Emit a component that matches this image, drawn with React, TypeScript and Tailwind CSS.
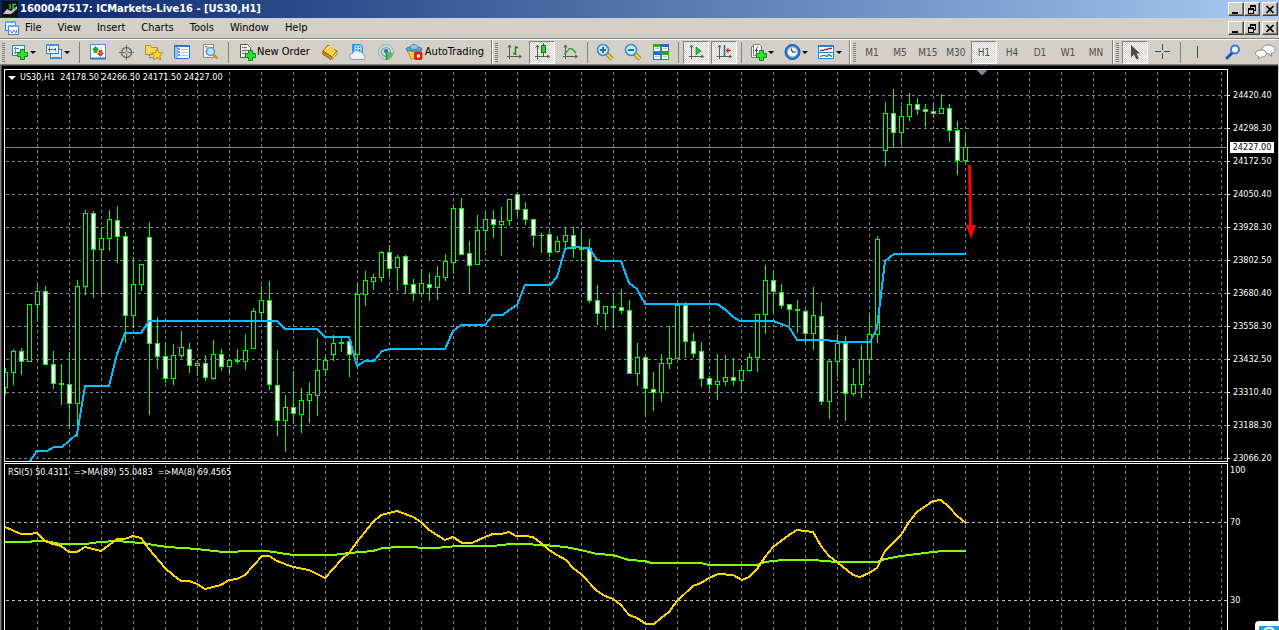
import type { ReactNode } from "react";

type Candle = [high: number, low: number, top: number, bottom: number, filled: 0 | 1];

const candles: Candle[] = [
  [368, 395, 372, 388, 0], [349, 385, 351, 373, 0], [348, 375, 351, 362, 1], [304, 362, 304, 362, 0],
  [284, 322, 291, 305, 0], [286, 365, 291, 365, 1], [351, 389, 364, 384, 1], [364, 405, 383, 385, 0],
  [352, 427, 384, 404, 1], [280, 437, 286, 404, 0], [210, 295, 213, 287, 0], [211, 298, 213, 250, 1],
  [227, 294, 238, 250, 0], [210, 251, 219, 239, 0], [206, 263, 220, 237, 1], [232, 343, 236, 316, 1],
  [257, 328, 284, 316, 0], [264, 291, 264, 285, 0], [222, 415, 237, 344, 1], [317, 369, 343, 357, 1],
  [342, 383, 356, 379, 1], [344, 385, 355, 379, 0], [331, 358, 347, 356, 0], [343, 373, 349, 366, 1],
  [360, 376, 363, 366, 0], [355, 381, 363, 378, 1], [340, 380, 354, 379, 0], [349, 371, 354, 367, 1],
  [359, 374, 360, 367, 0], [349, 364, 360, 362, 0], [334, 370, 350, 362, 0], [308, 349, 311, 349, 0],
  [286, 319, 300, 313, 0], [281, 390, 300, 385, 1], [350, 436, 385, 421, 1], [395, 452, 407, 421, 0],
  [371, 424, 407, 414, 1], [388, 433, 400, 415, 0], [382, 423, 394, 401, 0], [338, 416, 370, 396, 0],
  [357, 376, 360, 370, 0], [335, 361, 343, 355, 0], [337, 352, 342, 344, 0], [338, 377, 341, 355, 1],
  [283, 360, 294, 355, 0], [271, 306, 280, 295, 0], [274, 290, 277, 282, 0], [251, 282, 252, 278, 0],
  [245, 276, 252, 269, 1], [255, 291, 257, 268, 0], [255, 294, 256, 285, 1], [279, 301, 284, 294, 1],
  [269, 295, 283, 294, 0], [273, 301, 284, 288, 1], [266, 300, 276, 288, 0], [254, 281, 261, 278, 0],
  [207, 274, 208, 263, 0], [198, 255, 208, 255, 1], [241, 294, 253, 266, 1], [215, 265, 230, 265, 0],
  [212, 251, 219, 231, 0], [210, 238, 219, 225, 1], [207, 256, 221, 225, 0], [199, 226, 199, 221, 0],
  [194, 216, 194, 210, 1], [202, 225, 209, 220, 1], [219, 247, 219, 236, 1], [233, 253, 235, 236, 0],
  [231, 257, 234, 253, 1], [236, 253, 241, 252, 0], [227, 249, 235, 242, 0], [227, 258, 235, 249, 1],
  [231, 262, 248, 250, 0], [239, 303, 248, 301, 1], [285, 325, 300, 314, 1], [306, 330, 306, 314, 0],
  [294, 328, 306, 308, 0], [289, 314, 307, 311, 1], [300, 374, 310, 374, 1], [343, 386, 357, 374, 0],
  [357, 416, 357, 389, 1], [372, 411, 389, 393, 1], [354, 402, 363, 393, 0], [326, 369, 358, 364, 0],
  [305, 359, 305, 359, 0], [302, 358, 305, 342, 1], [333, 358, 341, 354, 1], [342, 387, 351, 379, 1],
  [376, 392, 378, 385, 1], [354, 400, 381, 385, 0], [355, 386, 377, 382, 0], [358, 386, 377, 381, 1],
  [365, 392, 370, 381, 0], [353, 372, 357, 371, 0], [314, 372, 314, 358, 0], [265, 334, 280, 315, 0],
  [271, 313, 280, 292, 1], [284, 309, 292, 306, 1], [304, 326, 304, 310, 1], [300, 333, 309, 311, 0],
  [309, 344, 311, 334, 1], [287, 350, 315, 334, 0], [302, 405, 316, 402, 1], [359, 419, 361, 402, 0],
  [334, 377, 343, 362, 0], [336, 421, 343, 394, 1], [368, 396, 384, 394, 0], [345, 398, 359, 385, 0],
  [315, 375, 334, 360, 0], [236, 343, 239, 335, 0], [102, 166, 113, 151, 0], [89, 148, 113, 133, 1],
  [106, 144, 116, 133, 0], [93, 121, 104, 117, 0], [98, 115, 104, 110, 1], [104, 127, 109, 112, 1],
  [104, 118, 111, 114, 1], [94, 114, 108, 114, 0], [104, 142, 108, 131, 1], [121, 175, 130, 161, 1],
  [135, 163, 147, 161, 0],
];

const trend =
  "30,461 37,451 47,451 54,447 62,447 69,441 77,434 85,386 109,386 117,354 125,333 141,333 149,321 277,321 285,329 317,329 325,337 349,337 357,366 365,361 374,361 382,351 390,349 445,349 453,331 461,325 485,325 493,315 503,315 509,310 517,305 525,285 550,285 557,277 565,249 574,247 581,247 583,248 589,248 597,260 603,261 621,261 629,283 637,289 645,304 717,304 726,310 733,317 740,321 773,321 789,327 797,340 821,340 837,341 839,342 870,342 877,328 885,261 894,254 966,254";

const fastMa =
  "5,527 21,534 29,534 37,533 45,541 53,544 61,546 69,552 77,552 85,547 93,549 101,551 109,545 117,539 125,539 133,536 141,538 149,549 165,568 173,575 181,581 189,581 197,584 205,589 221,585 229,580 237,579 245,575 262,556 269,556 277,561 293,567 309,570 325,578 341,560 349,553 357,542 373,522 381,515 397,511 413,517 421,522 429,530 445,540 453,537 462,543 472,543 485,537 493,534 501,534 509,532 516,536 525,536 533,537 541,543 549,550 557,555 566,560 573,568 581,574 597,591 605,596 613,599 621,605 629,615 637,618 646,624 654,624 661,618 669,612 677,601 693,586 701,583 709,578 718,574 733,575 742,580 749,577 757,569 765,557 773,547 781,541 789,535 797,530 813,532 821,546 829,556 837,562 853,575 860,577 869,573 877,568 885,551 901,535 909,522 917,512 933,501 941,500 949,507 957,516 966,523";

const slowMa =
  "5,542 30,542 33,541 45,541 61,544 85,544 100,542 117,541 141,543 167,547 197,549 223,552 253,551 267,551 293,555 333,555 349,553 373,551 383,548 400,547 436,548 457,546 493,546 510,544 523,544 543,545 565,547 581,550 597,554 613,555 629,560 645,561 651,563 701,563 709,565 757,565 765,562 783,560 813,560 837,562 877,562 885,559 901,556 917,554 933,552 943,551 966,551";

const prices = [
  "24420.40", "24298.30", "24172.50", "24050.40", "23928.30", "23802.50",
  "23680.40", "23558.30", "23432.50", "23310.40", "23188.30", "23066.20",
];

const menus = ["File", "View", "Insert", "Charts", "Tools", "Window", "Help"];
const periods = ["M1", "M5", "M15", "M30", "H1", "H4", "D1", "W1", "MN"];

function Icon({ children, w = 18 }: { children: ReactNode; w?: number }) {
  return (
    <svg width={w} height="18" viewBox={`0 0 ${w} 18`} className="shrink-0" aria-hidden="true">
      {children}
    </svg>
  );
}

function Plus({ x, y }: { x: number; y: number }) {
  return (
    <path
      transform={`translate(${x} ${y})`}
      d="M3.5 .5h4v3h3v4h-3v3h-4v-3h-3v-4h3z"
      fill="#2fe02f"
      stroke="#07891a"
    />
  );
}

function Axes() {
  return (
    <path d="M4.500 2v14M2 13.500h14M3 4.500l1.500-2.500 1.500 2.500M14 12l2.500 1.500-2.500 1.500" stroke="#5a5a5a" fill="none" />
  );
}

function Caret() {
  return (
    <svg width="6" height="3" viewBox="0 0 6 3" className="shrink-0" aria-hidden="true">
      <path d="M0 0h6L3 3z" fill="#000" />
    </svg>
  );
}

function Tool({ label, children, pressed }: { label: string; children: ReactNode; pressed?: boolean }) {
  return (
    <div className="flex h-6 w-7 shrink-0 items-center justify-center">
      <button
        type="button"
        aria-label={label}
        aria-pressed={pressed}
        className={
          pressed
            ? "flex h-[23px] w-[26px] items-center justify-center border border-t-[#808080] border-r-white border-b-white border-l-[#808080] bg-[#eae8e4] bg-[conic-gradient(#fff_25%,#d4d0c8_0_50%,#fff_0_75%,#d4d0c8_0)] bg-[length:2px_2px]"
            : "flex h-[23px] w-[26px] items-center justify-center"
        }
      >
        {children}
      </button>
    </div>
  );
}

function DropTool({ label, children }: { label: string; children: ReactNode }) {
  return (
    <button type="button" aria-label={label} className="flex h-6 w-[34px] shrink-0 items-center justify-center">
      {children}
      <Caret />
    </button>
  );
}

function Sep({ wide }: { wide?: boolean }) {
  return (
    <div
      className={
        wide ? "mx-1 h-[21px] w-px shrink-0 bg-[#808080]" : "mx-[3px] h-[21px] w-px shrink-0 bg-[#808080]"
      }
    />
  );
}

function Edge() {
  return <div className="ml-[2px] h-[25px] w-[2px] shrink-0 border-l border-[#808080] bg-white" />;
}

function Grip() {
  return (
    <div className="mx-[2px] h-[19px] w-[3px] shrink-0 bg-[repeating-linear-gradient(to_bottom,#808080_0_1px,#d4d0c8_1px_2px)]" />
  );
}

const boxButton =
  "flex h-[14px] w-4 items-center justify-center border border-t-white border-r-[#404040] border-b-[#404040] border-l-white bg-[#d4d0c8] shadow-[inset_-1px_-1px_#808080]";

function WindowButtons() {
  return (
    <div className="flex">
      <button type="button" aria-label="Minimize" className={boxButton}>
        <svg width="10" height="9" aria-hidden="true"><path d="M1 7h6v2H1z" /></svg>
      </button>
      <button type="button" aria-label="Restore" className={boxButton}>
        <svg width="10" height="9" shapeRendering="crispEdges" aria-hidden="true">
          <path d="M3 0h6v6H7V5h1V2H4v1H3zM1 3h6v6H1zM2 5v3h4V5z" fillRule="evenodd" />
        </svg>
      </button>
      <button type="button" aria-label="Close" className={boxButton + " ml-[2px]"}>
        <svg width="10" height="9" aria-hidden="true"><path d="M1.500 1l7 7M8.500 1l-7 7" stroke="#000" strokeWidth="1.700" /></svg>
      </button>
    </div>
  );
}

function Magnifier({ sign }: { sign: string }) {
  return (
    <Icon>
      <path d="M11 11l5 5" stroke="#8a6a10" strokeWidth="4" />
      <path d="M11 11l5 5" stroke="#f3cf4a" strokeWidth="2.500" />
      <circle cx="7" cy="7" r="5.500" fill="#c9ecff" stroke="#3a86c8" strokeWidth="1.500" />
      <path d={sign} stroke="#1c6faf" strokeWidth="2" />
    </Icon>
  );
}

function Toolbar() {
  return (
    <div className="flex h-[25px] items-center overflow-hidden border-t border-white bg-[#d4d0c8]" role="toolbar">
      <Grip />
      <DropTool label="New chart">
        <Icon>
          <rect x="0.500" y="2.500" width="12" height="10" fill="#eef7ff" stroke="#3c7fb8" />
          <path d="M3.500 4v7M2 9.500h8M2 5.500h5" stroke="#5c8bb5" fill="none" />
          <Plus x={5} y={6} />
        </Icon>
      </DropTool>
      <DropTool label="Profiles">
        <Icon>
          <rect x="4.500" y="6.500" width="11" height="9" fill="#dceeff" stroke="#3c7fb8" />
          <rect x="0.500" y="1.500" width="12" height="9" fill="#eef7ff" stroke="#3c7fb8" />
          <path d="M0 2h13M5 15h11" stroke="#4a90d0" strokeWidth="2" />
          <path d="M3.500 4v5M2 6.500h8M9.500 5v3" stroke="#44729a" fill="none" />
        </Icon>
      </DropTool>
      <Sep wide />
      <Tool label="Market watch">
        <Icon>
          <rect x="1.500" y="1.500" width="15" height="14" fill="#fff" stroke="#3f92dc" />
          <path d="M1 15.500h16" stroke="#2c78c0" strokeWidth="2" />
          <path d="M8 5h6M8 8h6M8 11h6" stroke="#cfdce8" />
          <path d="M6.500 3.500l3 3H8v3H5v-3H3.500z" fill="#28b428" stroke="#127812" strokeWidth=".6" />
          <path d="M11.500 13.500l3-3H13v-3h-3v3H8.500z" fill="#f05020" stroke="#a82a08" strokeWidth=".6" />
        </Icon>
      </Tool>
      <Tool label="Data window">
        <Icon>
          <circle cx="9.500" cy="9.500" r="5" fill="none" stroke="#6c6c6c" strokeWidth="1.500" />
          <path d="M9.500 2v15M2 9.500h15" stroke="#6c6c6c" />
          <circle cx="9.500" cy="9.500" r="1.500" fill="#d4d0c8" stroke="#777" strokeWidth=".7" />
        </Icon>
      </Tool>
      <Tool label="Navigator">
        <Icon>
          <path d="M.5 2.500h5l1 2h6v7H.5z" fill="#f8d860" stroke="#c09018" />
          <path d="M4.500 12v4M4.500 14.500h4" stroke="#555" strokeDasharray="1 1" />
          <path d="M12 6l1.800 3.500 3.700.5-2.700 2.700.7 4-3.500-2-3.500 2 .7-4L6.500 10l3.700-.5z" fill="#ffd83c" stroke="#a87008" strokeWidth=".8" />
        </Icon>
      </Tool>
      <Tool label="Terminal">
        <Icon>
          <rect x="1.500" y="2.500" width="15" height="13" rx="1" fill="#f6fbff" stroke="#2878c4" />
          <path d="M1 3h16" stroke="#2878c4" strokeWidth="2" />
          <path d="M3.500 4v11" stroke="#8cc0ee" strokeWidth="3" />
          <path d="M8 6.500h7M8 9.500h7M8 12.500h7" stroke="#a9c4de" />
          <path d="M6 5v2M6 8v2M6 11v2" stroke="#222" />
        </Icon>
      </Tool>
      <Tool label="Strategy tester">
        <Icon>
          <path d="M2.500 1.500h10v13h-10z" fill="#f6f4ef" stroke="#8a8a8a" />
          <path d="M4 3.500h2v3h3v-2h3M4 9h2v3" stroke="#888" fill="none" />
          <circle cx="9.500" cy="8.500" r="4" fill="#bfe2fa" stroke="#5a9ac8" strokeWidth="1.500" />
          <path d="M12.500 11.500l4 4" stroke="#c89818" strokeWidth="2.500" />
        </Icon>
      </Tool>
      <Sep wide />
      <button type="button" className="flex h-6 shrink-0 items-center gap-px pr-[6px] pl-[5px]">
        <Icon>
          <path d="M2.500 1.500h7l3 3v10h-10z" fill="#fff" stroke="#555" />
          <path d="M4 4.500h5M4 7.500h7M4 10.500h5" stroke="#777" strokeWidth="1.500" />
          <Plus x={7} y={7} />
        </Icon>
        New Order
      </button>
      <Tool label="MetaEditor">
        <Icon>
          <path d="M2 8l5-6 9 6-5 6z" fill="#ffd24a" stroke="#a86c08" />
          <path d="M2 8l-.5 3 8 5.500L11 14z" fill="#c98a14" stroke="#8a5606" strokeWidth=".8" />
          <path d="M11 14l5-6v3l-5 5.500z" fill="#fff3c0" stroke="#a86c08" strokeWidth=".8" />
          <path d="M6 6l3-3 4 3" stroke="#fff2b0" fill="none" />
        </Icon>
      </Tool>
      <Tool label="Cloud">
        <Icon>
          <path d="M3 1h8l3 2v7H3z" fill="#1e9cf0" />
          <path d="M6 3h6v6H6zM9 3v6M6 5.500h6" fill="none" stroke="#d8f0ff" />
          <path d="M4 16.500a3 3 0 01-.5-6 4 4 0 017-1.500 3.200 3.200 0 014 3 2.300 2.300 0 01-.5 4.500z" fill="#eef3fb" stroke="#8098b8" />
        </Icon>
      </Tool>
      <Tool label="Signals">
        <Icon>
          <circle cx="9" cy="9" r="7.500" fill="#cfdcd8" stroke="#8fb2bc" />
          <circle cx="9" cy="9" r="4.500" fill="none" stroke="#7fabbc" strokeWidth="1.500" />
          <path d="M9 8l7 2a8 8 0 01-6 7z" fill="#68b868" />
          <circle cx="9" cy="8" r="2" fill="#3468b8" />
          <path d="M9.500 9v8" stroke="#1c9a2c" strokeWidth="1.500" />
        </Icon>
      </Tool>
      <button type="button" className="flex h-6 shrink-0 items-center gap-px pr-[5px] pl-[5px]">
        <Icon w={19}>
          <path d="M2 7l4 9 8-1 3-8z" fill="#f8d048" stroke="#c09018" />
          <ellipse cx="9" cy="6" rx="8" ry="2.300" fill="#5aa8d4" stroke="#2f7ea8" />
          <path d="M5 5.500c0-5.500 8-5.500 8 0-2 1.200-6 1.200-8 0z" fill="#8ccaea" stroke="#2f7ea8" strokeWidth=".8" />
          <rect x="9" y="8.500" width="8.500" height="8.500" rx="2" fill="#e02010" />
          <rect x="12" y="11.500" width="3" height="3" fill="#fff" />
        </Icon>
        AutoTrading
      </button>
      <Edge />
      <Grip />
      <Tool label="Bar chart">
        <Icon>
          <Axes />
          <path d="M10.500 3v9M8 10.500h2M11 4.500h2" stroke="#0a8a18" strokeWidth="1.500" />
        </Icon>
      </Tool>
      <Tool label="Candlesticks" pressed>
        <Icon>
          <Axes />
          <path d="M10.500 0v13" stroke="#087818" />
          <rect x="8.500" y="2.500" width="4" height="7" fill="#2ad838" stroke="#087818" />
        </Icon>
      </Tool>
      <Tool label="Line chart">
        <Icon>
          <Axes />
          <path d="M3 11c4-2 4-6 7-5.500 2 .5 3 2 5 4.500" stroke="#2a9a38" strokeWidth="1.300" fill="none" />
        </Icon>
      </Tool>
      <Sep />
      <Tool label="Zoom in"><Magnifier sign="M4 7h6M7 4v6" /></Tool>
      <Tool label="Zoom out"><Magnifier sign="M4 7h6" /></Tool>
      <Tool label="Tile windows">
        <Icon>
          <path d="M1 1h8v8H1zM9 9h8v8H9z" fill="#38a818" />
          <path d="M9 1h8v8H9zM1 9h8v8H1z" fill="#2868d8" />
          <path d="M2 4h6v4H2zM10 4h6v4h-6zM2 12h6v4H2zM10 12h6v4h-6z" fill="#fff" />
          <path d="M3 5.500h4M11 5.500h4M3 13.500h4M11 13.500h4" stroke="#9cc0e0" />
        </Icon>
      </Tool>
      <Sep />
      <Tool label="Auto scroll" pressed>
        <Icon>
          <Axes />
          <path d="M9 4l5 4-5 4z" fill="#2ac838" stroke="#087818" strokeWidth=".7" />
        </Icon>
      </Tool>
      <Tool label="Chart shift" pressed>
        <Icon>
          <Axes />
          <path d="M9.500 2v11" stroke="#1a68b0" strokeWidth="1.500" />
          <path d="M16 7.500h-4" stroke="#c03808" strokeWidth="1.500" />
          <path d="M10.500 7.500l3-3v6z" fill="#c03808" />
        </Icon>
      </Tool>
      <Sep />
      <DropTool label="Indicators">
        <Icon>
          <path d="M1.500 3.500h8v11h-8z" fill="#fff" stroke="#777" />
          <path d="M3.500 1.500h6l2 2v9h-8z" fill="#fff" stroke="#777" />
          <path d="M8.500 4c-2 0-2 1-2 3v4M5 7.500h3" stroke="#444" fill="none" />
          <Plus x={6} y={7} />
        </Icon>
      </DropTool>
      <DropTool label="Periods">
        <Icon>
          <circle cx="8.500" cy="9" r="7.500" fill="#2a78cc" stroke="#1a58a0" />
          <circle cx="8.500" cy="9" r="5" fill="#f6faff" stroke="#8cc0f0" />
          <path d="M7 5.500L8.500 9H12" stroke="#333" fill="none" strokeWidth="1.200" />
        </Icon>
      </DropTool>
      <DropTool label="Templates">
        <Icon>
          <rect x="0.500" y="2.500" width="15" height="13" fill="#fff" stroke="#2f80cc" />
          <path d="M0 3h16" stroke="#2f80cc" strokeWidth="2" />
          <path d="M0 9.500h16" stroke="#2f80cc" />
          <path d="M2 7.500h3l2-1h2l2-1h3" stroke="#a03010" fill="none" strokeWidth="1.300" />
          <path d="M2 13.500l3-1h2l2 1 2-2 3 2" stroke="#1a8a28" fill="none" strokeWidth="1.200" />
        </Icon>
      </DropTool>
      <Edge />
      <Grip />
      {periods.map((p) => (
        <Tool key={p} label={p} pressed={p === "H1"}>
          <span className="text-[10px] text-[#4c4c4c]">{p}</span>
        </Tool>
      ))}
      <Edge />
      <Grip />
      <Tool label="Cursor" pressed>
        <Icon><path d="M5 2v12.500l3-3 2.500 5 2.500-1-2.500-5H14z" fill="#4c4c4c" /></Icon>
      </Tool>
      <Tool label="Crosshair">
        <Icon><path d="M8.500 1v6M8.500 10v6M1 8.500h6M10 8.500h6" stroke="#444" /></Icon>
      </Tool>
      <Sep />
      <Tool label="Vertical line">
        <Icon><path d="M8.500 3v12" stroke="#444" /></Icon>
      </Tool>
      <div className="ml-auto flex gap-1">
        <Tool label="Search">
          <Icon>
            <path d="M8 10l-5 5" stroke="#2050b8" strokeWidth="3" strokeLinecap="round" />
            <circle cx="11" cy="6.500" r="4" fill="#e8f4ff" stroke="#3a78dc" strokeWidth="2" />
          </Icon>
        </Tool>
        <Tool label="Chat">
          <Icon w={22}>
            <path d="M14 2c9 0 9 8 3 8.500l1 3-4-3c-8-1-7-8.500 0-8.500z" fill="#f6f6f6" stroke="#8c8c8c" />
            <path d="M7 7c7 0 7 6.500 1 7l-4 2 1-2.500C-1 12 1 7 7 7z" fill="#fff" stroke="#8c8c8c" />
          </Icon>
        </Tool>
      </div>
    </div>
  );
}

function PricePlot() {
  return (
    <svg width="100%" height="391" className="block" shapeRendering="crispEdges" role="img" aria-label="US30 H1 candles">
      <defs>
        <pattern id="cols" x="32" y="2" width="32" height="6" patternUnits="userSpaceOnUse">
          <rect width="1" height="3" fill="#778899" />
        </pattern>
        <pattern id="rows" x="1" y="25" width="6" height="33" patternUnits="userSpaceOnUse">
          <rect width="3" height="1" fill="#778899" />
        </pattern>
      </defs>
      <rect x="1" width="100%" height="100%" fill="url(#cols)" />
      <rect width="100%" height="100%" fill="url(#rows)" />
      <rect y="77" width="100%" height="1" fill="#778899" />
      <g transform="translate(-5 -70)">
        <path d="M976 70h11l-5 5h-1z" fill="#778899" />
        {candles.map(([high, low, top, bottom, filled], i) => {
          const x = 5 + i * 8;
          const h = bottom - top;
          return (
            <g key={i} fill="#00ff00">
              <rect x={x} y={high} width="1" height={low - high} />
              <rect x={x - 2} y={top} width="5" height={h} />
              {h > 2 && <rect x={x - 1} y={top + 1} width="3" height={h - 2} fill={filled ? "#fff" : "#000"} />}
            </g>
          );
        })}
        <polyline points={trend} fill="none" stroke="#00bfff" strokeWidth="2" />
        <g shapeRendering="auto">
          <path d="M968 165h3l1 60h4l-5 14-5-14h3z" fill="#f00" />
        </g>
      </g>
    </svg>
  );
}

function RsiPlot() {
  return (
    <svg width="100%" height="100%" className="block" shapeRendering="crispEdges" role="img" aria-label="RSI">
      <defs>
        <pattern id="rsi-cols" x="32" y="0" width="32" height="6" patternUnits="userSpaceOnUse">
          <rect y="1" width="1" height="3" fill="#778899" />
        </pattern>
        <pattern id="levels" x="1" y="58" width="6" height="78" patternUnits="userSpaceOnUse">
          <rect width="3" height="1" fill="#c0c0c0" />
        </pattern>
      </defs>
      <rect x="1" width="100%" height="100%" fill="url(#rsi-cols)" />
      <rect width="100%" height="100%" fill="url(#levels)" />
      <g transform="translate(-5 -464)" fill="none" strokeWidth="2">
        <polyline points={slowMa} stroke="#7fff00" />
        <polyline points={fastMa} stroke="#ffd700" />
      </g>
    </svg>
  );
}

function RsiLabel({ children }: { children: ReactNode }) {
  return <div className="flex h-4 items-center pl-[2px]">{children}</div>;
}

export default function App() {
  return (
    <div className="relative flex h-screen flex-col overflow-hidden bg-[#d4d0c8] font-['DejaVu_Sans_Condensed','DejaVu_Sans',sans-serif] text-[11px] text-black">
      <header className="flex h-[18px] shrink-0 items-center justify-between bg-linear-to-r from-[#0a246a] to-[#a6caf0] pr-px pl-[2px]">
        <div className="flex items-center gap-[2px] text-[11px] font-bold text-white">
          <svg width="16" height="16" aria-hidden="true">
            <rect width="16" height="16" fill="#111" />
            <path d="M1 13l4-5 4 2 6-5v3l-6 5z" fill="#c8c8c8" />
            <path d="M8 3v5M14 3.500h-3v4h3" stroke="#4ab848" strokeWidth="1.500" fill="none" />
          </svg>
          <h1 className="whitespace-pre">1600047517: ICMarkets-Live16 - [US30,H1]</h1>
        </div>
        <WindowButtons />
      </header>

      <nav className="flex h-[21px] shrink-0 items-center justify-between border-b border-[#808080] pr-px pl-1">
        <div className="flex items-center gap-4">
          <div className="flex items-center gap-[5px]">
            <svg width="16" height="16" viewBox="0 0 16 16" aria-hidden="true">
              <rect x="1.500" y="1.500" width="10" height="9" fill="#eaf4ff" stroke="#3c80dc" />
              <rect x="4.500" y="5.500" width="10" height="9" fill="#fff" stroke="#3c80dc" />
              <path d="M1 2h11M4 6h11" stroke="#68a8f0" strokeWidth="2" />
              <path d="M6 10l2 3 2-3 2 3 1-3" stroke="#3c80dc" fill="none" />
            </svg>
            <button type="button">{menus[0]}</button>
          </div>
          {menus.slice(1).map((m) => (
            <button key={m} type="button">{m}</button>
          ))}
        </div>
        <WindowButtons />
      </nav>

      <Toolbar />

      <main className="flex min-h-0 flex-1 flex-col border-t border-r border-l border-t-[#808080] border-r-[#d4d0c8] border-l-[#808080] bg-black text-[9px] text-white">
        <div className="flex min-h-0 flex-1 flex-col border-t border-l border-[#404040] pt-[3px] pl-[2px]">
          <section className="flex h-[393px] shrink-0">
            <div className="relative min-w-0 flex-1 border border-white">
              <PricePlot />
              <p className="absolute top-0 left-[3px] flex h-4 items-center gap-1 whitespace-pre">
                <svg width="8" height="4" aria-hidden="true"><path d="M0 0h8L4 4z" fill="#fff" /></svg>
                US30,H1  24178.50 24266.50 24171.50 24227.00
              </p>
            </div>
            <div className="relative w-[50px] shrink-0 pt-[10px]">
              {prices.map((p) => (
                <div key={p} className="flex h-[33px] items-center gap-[3px]">
                  <span className="h-px w-[2px] bg-white" />
                  {p}
                </div>
              ))}
              <span className="absolute top-[73px] left-[2px] flex h-[11px] w-11 items-center justify-center bg-white text-black">24227.00</span>
            </div>
          </section>
          <section className="mt-px flex min-h-0 flex-1">
            <div className="relative min-w-0 flex-1 border-t border-r border-l border-white">
              <RsiPlot />
              <p className="absolute top-0 left-[3px] flex h-[18px] items-center whitespace-pre">
                {"RSI(5) 50.4311  =>MA(89) 55.0483  =>MA(8) 69.4565"}
              </p>
            </div>
            <div className="w-[50px] shrink-0">
              <RsiLabel>100</RsiLabel>
              <div className="mt-9"><RsiLabel>70</RsiLabel></div>
              <div className="mt-[62px]"><RsiLabel>30</RsiLabel></div>
            </div>
          </section>
        </div>
      </main>

      <div className="absolute right-0 bottom-0 h-[9px] w-6 overflow-hidden rounded-tl-[4px] bg-white pt-[5px] pl-1">
        <svg width="20" height="4" aria-hidden="true">
          <rect width="20" height="4" fill="#14a4e8" />
          <path d="M5 4q5-4.500 10 0" stroke="#fff" strokeWidth="2" fill="none" />
        </svg>
      </div>
    </div>
  );
}
